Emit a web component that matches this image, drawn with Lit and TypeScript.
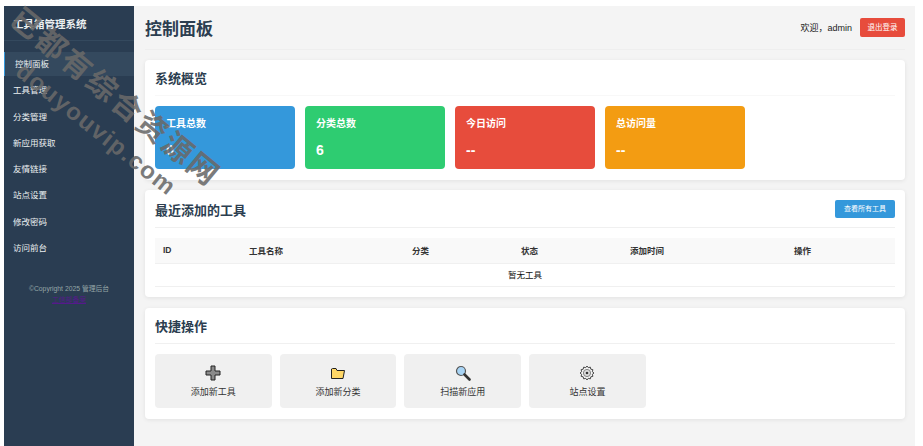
import { LitElement, html, css, svg } from 'lit';
import { customElement } from 'lit/decorators.js';

const NAV = ['控制面板', '工具管理', '分类管理', '新应用获取', '友情链接', '站点设置', '修改密码', '访问前台'];
const STATS = [
    { label: '工具总数', value: '0', color: '#3498db' },
    { label: '分类总数', value: '6', color: '#2ecc71' },
    { label: '今日访问', value: '--', color: '#e74c3c' },
    { label: '总访问量', value: '--', color: '#f39c12' },
];
const COLUMNS = ['ID', '工具名称', '分类', '状态', '添加时间', '操作'];

const plusIcon = svg`<path d="M6 1h4v5h5v4h-5v5H6v-5H1V6h5z" fill="#8a8a8a" stroke="#222" stroke-width="1"/>`;
const folderIcon = svg`<path d="M1.500 4V13.500h11.500L14.500 5.500H7L6 3.500H2.500z" fill="#ffd766" stroke="#222" stroke-width="1"/>`;
const searchIcon = svg`<circle cx="6" cy="6" r="4.500" fill="#a8d4f5" stroke="#555" stroke-width="1.200"/><path d="M9.500 9.500l5 5" stroke="#333" stroke-width="2.600" stroke-linecap="round"/>`;
const gearIcon = svg`<path d="M8 1l1.300 1.700 2-.6.500 2.100 2.100.5-.6 2L15 8l-1.700 1.300.6 2-2.100.5-.5 2.100-2-.6L8 15l-1.300-1.700-2 .6-.5-2.100-2.100-.5.6-2L1 8l1.700-1.300-.6-2 2.100-.5.500-2.100 2 .6z" fill="#f4f4f4" stroke="#333" stroke-width=".9"/><circle cx="8" cy="8" r="3.600" fill="#ddd" stroke="#777" stroke-width=".9"/><circle cx="8" cy="8" r="1.300" fill="#333"/>`;

const ACTIONS = [
    { label: '添加新工具', icon: plusIcon },
    { label: '添加新分类', icon: folderIcon },
    { label: '扫描新应用', icon: searchIcon },
    { label: '站点设置', icon: gearIcon },
];

@customElement('app-root')
export class AppRoot extends LitElement {
    static styles = css`
        :host {
            display: block;
            position: relative;
            height: 446px;
            overflow: hidden;
            background: #fff;
            font-family: "Liberation Sans", "Noto Sans CJK SC", sans-serif;
            color: #333;
        }

        .frame {
            display: flex;
            height: 440px;
            margin: 6px 8px 0 4px;
            background: #f4f4f4;
        }

        .sidebar {
            width: 130px;
            flex: none;
            background: #2a3d52;
            color: #ecf0f1;
        }

        .brand {
            height: 34px;
            padding: 0 9px;
            font-size: 10.500px;
            font-weight: bold;
            line-height: 36px;
            border-bottom: 1px solid #34495e;
            margin-bottom: 11px;
        }

        .nav-item {
            height: 24px;
            line-height: 24px;
            margin-bottom: 2.300px;
            padding-left: 9px;
            font-size: 8.500px;
        }

        .nav-item.active {
            background: #34495e;
            border-left: 1px solid #3498db;
            padding-left: 10px;
        }

        .copyright {
            margin-top: 23px;
            text-align: center;
            font-size: 6.800px;
            line-height: 11px;
            color: #95a5a6;
        }

        .copyright a {
            color: #551a8b;
            text-decoration: underline;
        }

        .main {
            flex: 1;
            padding: 0 10px 0 11px;
        }

        .topbar {
            display: flex;
            align-items: center;
            justify-content: space-between;
            height: 43px;
            border-bottom: 1px solid #eeeeee;
            margin-bottom: 10px;
        }

        h1 {
            margin: 0;
            font-size: 17px;
            color: #2c3e50;
        }

        .user {
            display: flex;
            align-items: center;
            gap: 8px;
            font-size: 9px;
            color: #222;
        }

        .btn {
            border-radius: 2px;
            color: #fff;
            text-align: center;
        }

        .logout {
            width: 45px;
            height: 19px;
            line-height: 19px;
            font-size: 7.500px;
            background: #e74c3c;
        }

        .card {
            background: #fff;
            border-radius: 4px;
            box-shadow: 0 1px 4px rgba(0, 0, 0, 0.08);
            padding: 0 10px;
            margin-bottom: 10px;
        }

        .card-head {
            display: flex;
            align-items: center;
            justify-content: space-between;
            height: 35px;
            border-bottom: 1px solid #f0f0f0;
            margin-bottom: 10px;
        }

        h2 {
            margin: 0;
            font-size: 13px;
            color: #2c3e50;
        }

        .overview {
            height: 120px;
        }

        .overview .card-head {
            border-bottom-color: #f8f8f8;
        }

        .stats {
            display: flex;
            gap: 10px;
        }

        .stat {
            width: 140px;
            height: 63px;
            box-sizing: border-box;
            padding: 10px 11px;
            border-radius: 4px;
            color: #fff;
            font-weight: bold;
        }

        .stat-label {
            font-size: 10px;
            line-height: 15px;
        }

        .stat-value {
            margin-top: 11px;
            font-size: 14px;
            line-height: 16px;
        }

        .recent {
            height: 107px;
            margin-bottom: 11px;
        }

        .recent .card-head {
            height: 37px;
        }

        .recent h2 {
            margin-top: 1px;
        }

        .view-all {
            width: 60px;
            height: 18px;
            line-height: 18px;
            font-size: 7px;
            background: #3498db;
        }

        table {
            width: 100%;
            border-collapse: collapse;
            table-layout: fixed;
            font-size: 8.500px;
        }

        th {
            height: 23px;
            padding: 0 8px 2px;
            text-align: left;
            font-weight: 600;
            background: #f9f9f9;
            border-bottom: 1px solid #f0f0f0;
        }

        td {
            height: 20px;
            padding: 0 0 2px;
            text-align: center;
            border-bottom: 1px solid #f0f0f0;
            color: #111;
        }

        .quick {
            height: 111px;
            margin-bottom: 0;
        }

        .actions {
            display: flex;
            gap: 8px;
        }

        .action {
            width: 116.700px;
            height: 54px;
            background: #f0f0f0;
            border-radius: 4px;
            display: flex;
            flex-direction: column;
            align-items: center;
            padding-top: 11px;
            box-sizing: border-box;
            font-size: 9px;
            line-height: 12px;
            color: #333;
        }

        .action svg {
            width: 16px;
            height: 16px;
            margin-bottom: 5px;
        }

        .watermark {
            position: absolute;
            left: 0;
            top: 0;
            width: 100%;
            height: 100%;
            overflow: hidden;
            pointer-events: none;
            color: rgba(105, 105, 105, 0.88);
            font-weight: bold;
        }

        .wm-line {
            position: absolute;
            white-space: nowrap;
            transform-origin: 0 0;
        }

        .wm-cn {
            left: 30px;
            top: -5px;
            font-size: 30px;
            letter-spacing: 2.700px;
            transform: rotate(39.500deg);
        }

        .wm-en {
            left: 28px;
            top: 57px;
            font-size: 24px;
            letter-spacing: 1.500px;
            transform: rotate(38.500deg);
        }
    `;

    render() {
        return html`
            <div class="frame">
                <aside class="sidebar">
                    <div class="brand">工具箱管理系统</div>
                    ${NAV.map((item, i) => html`<div class="nav-item ${i === 0 ? 'active' : ''}">${item}</div>`)}
                    <div class="copyright">
                        ©Copyright 2025 管理后台<br />
                        <a>工信部备案</a>
                    </div>
                </aside>
                <main class="main">
                    <header class="topbar">
                        <h1>控制面板</h1>
                        <div class="user">
                            <span>欢迎，admin</span>
                            <div class="btn logout">退出登录</div>
                        </div>
                    </header>
                    <section class="card overview">
                        <div class="card-head"><h2>系统概览</h2></div>
                        <div class="stats">
                            ${STATS.map(s => html`
                                <div class="stat" style="background:${s.color}">
                                    <div class="stat-label">${s.label}</div>
                                    <div class="stat-value">${s.value}</div>
                                </div>
                            `)}
                        </div>
                    </section>
                    <section class="card recent">
                        <div class="card-head">
                            <h2>最近添加的工具</h2>
                            <div class="btn view-all">查看所有工具</div>
                        </div>
                        <table>
                            <colgroup>
                                <col style="width:86px" /><col style="width:163px" /><col style="width:109px" />
                                <col style="width:109px" /><col style="width:164px" /><col />
                            </colgroup>
                            <tr>${COLUMNS.map(c => html`<th>${c}</th>`)}</tr>
                            <tr><td colspan="6">暂无工具</td></tr>
                        </table>
                    </section>
                    <section class="card quick">
                        <div class="card-head"><h2>快捷操作</h2></div>
                        <div class="actions">
                            ${ACTIONS.map(a => html`
                                <div class="action">
                                    <svg viewBox="0 0 16 16">${a.icon}</svg>
                                    <span>${a.label}</span>
                                </div>
                            `)}
                        </div>
                    </section>
                </main>
            </div>
            <div class="watermark">
                <div class="wm-line wm-cn">已都有综合资源网</div>
                <div class="wm-line wm-en">douyouvip.com</div>
            </div>
        `;
    }
}
